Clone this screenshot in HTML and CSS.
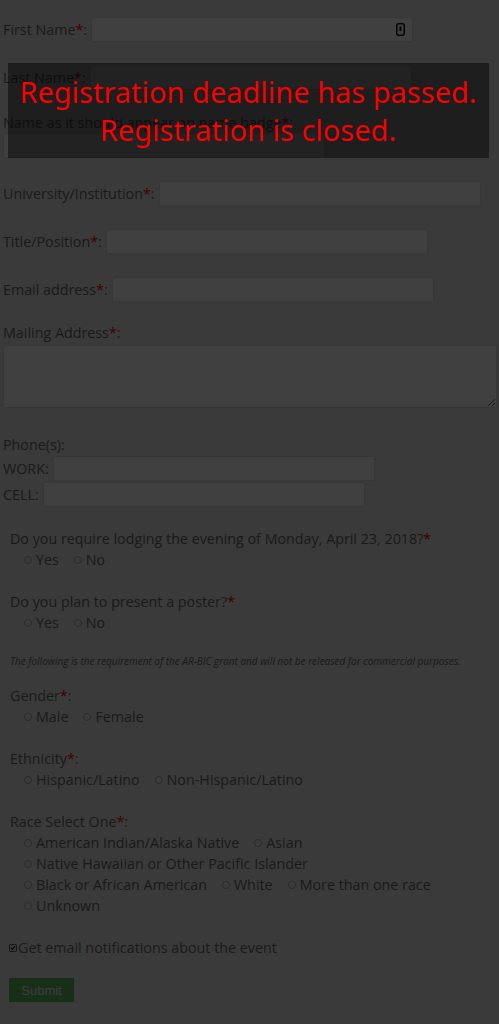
FILE: index.html
```html
<!DOCTYPE html>
<html>
<head>
<meta http-equiv="Content-Type" content="text/html; charset=utf-8" />
<title>Registration</title>
<link rel="stylesheet" href="styles.css">
</head>
<body>
<form class="regForm" onsubmit="return false;">
	<div class="field">
		<label>First Name<span class="req">*</span>:</label>
		<span class="inputWrap">
			<input type="text" class="inputText">
			<svg class="cardIcon" width="9" height="13" viewBox="0 0 9 13"><rect x="0.75" y="0.75" width="7.5" height="11.5" rx="2" fill="none" stroke="#111" stroke-width="1.5"/><rect x="3.5" y="3.5" width="2" height="4.5" fill="#111"/></svg>
		</span>
	</div>
	<div class="field">
		<label>Last Name<span class="req">*</span>:</label>
		<input type="text" class="inputText">
	</div>
	<div class="stacked">
		<label>Name as it should appear on name badge<span class="req">*</span>:</label>
		<input type="text" class="inputText">
	</div>
	<div class="field">
		<label>University/Institution<span class="req">*</span>:</label>
		<input type="text" class="inputText">
	</div>
	<div class="field">
		<label>Title/Position<span class="req">*</span>:</label>
		<input type="text" class="inputText">
	</div>
	<div class="field lastInline">
		<label>Email address<span class="req">*</span>:</label>
		<input type="text" class="inputText">
	</div>
	<div class="stacked mailing">
		<label>Mailing Address<span class="req">*</span>:</label>
		<textarea class="inputArea"></textarea>
	</div>
	<div class="phones">
		<div class="phoneTitle">Phone(s):</div>
		<div class="field phone">
			<label>WORK:</label>
			<input type="text" class="inputText">
		</div>
		<div class="field phone">
			<label>CELL:</label>
			<input type="text" class="inputText">
		</div>
	</div>

	<div class="questions">
		<div class="group">
			<div class="question">Do you require lodging the evening of Monday, April 23, 2018?<span class="req">*</span></div>
			<div class="options">
				<label class="opt"><input type="radio" name="lodging">Yes</label>
				<label class="opt"><input type="radio" name="lodging">No</label>
			</div>
		</div>
		<div class="group">
			<div class="question">Do you plan to present a poster?<span class="req">*</span></div>
			<div class="options">
				<label class="opt"><input type="radio" name="poster">Yes</label>
				<label class="opt"><input type="radio" name="poster">No</label>
			</div>
		</div>
		<p class="note">The following is the requirement of the AR-BIC grant and will not be released for commercial purposes.</p>
		<div class="group">
			<div class="question">Gender<span class="req">*</span>:</div>
			<div class="options">
				<label class="opt"><input type="radio" name="gender">Male</label>
				<label class="opt"><input type="radio" name="gender">Female</label>
			</div>
		</div>
		<div class="group">
			<div class="question">Ethnicity<span class="req">*</span>:</div>
			<div class="options">
				<label class="opt"><input type="radio" name="ethnicity">Hispanic/Latino</label>
				<label class="opt"><input type="radio" name="ethnicity">Non-Hispanic/Latino</label>
			</div>
		</div>
		<div class="group">
			<div class="question">Race Select One<span class="req">*</span>:</div>
			<div class="options">
				<label class="opt"><input type="radio" name="race">American Indian/Alaska Native</label>
				<label class="opt"><input type="radio" name="race">Asian</label>
				<label class="opt"><input type="radio" name="race">Native Hawaiian or Other Pacific Islander</label>
				<label class="opt"><input type="radio" name="race">Black or African American</label>
				<label class="opt"><input type="radio" name="race">White</label>
				<label class="opt"><input type="radio" name="race">More than one race</label>
				<label class="opt"><input type="radio" name="race">Unknown</label>
			</div>
		</div>
	</div>
	<label class="notify"><input type="checkbox" checked>Get email notifications about the event</label>
	<button type="submit" class="btnSubmit">Submit</button>
</form>

<div class="overlay"></div>
<div class="closedMsg">Registration deadline has passed.<br>Registration is closed.</div>
</body>
</html>
```

FILE: styles.css
```css
body
{
	margin: 0;
	background: #e6e6e6;
	font-family: "Open Sans", "Liberation Sans", Arial, sans-serif;
	font-size: 14.3px;
	color: #6a6a6a;
}
.regForm {padding: 17px 3px 0 3px;}
.req {color: #f00;}

.field
{
	display: flex;
	align-items: center;
	height: 25px;
	margin-bottom: 23px;
}
.field label {white-space: nowrap; margin-right: 4px;}
.lastInline {margin-bottom: 21px;}

.inputWrap {position: relative; display: inline-block; height: 25px;}
.cardIcon {position: absolute; right: 8px; top: 6px;}

.inputText
{
	display: block;
	box-sizing: border-box;
	width: 322px;
	height: 25px;
	margin: 0;
	padding: 2px 4px;
	border: 1px solid #dcdcdc;
	border-radius: 2px;
	background: #fff;
}
.stacked {margin-bottom: 23px;}
.stacked label {display: block; line-height: 20px;}
.mailing {margin-bottom: 27px;}
.inputArea
{
	display: block;
	box-sizing: border-box;
	width: 494px;
	height: 63px;
	margin: 2px 0 0 0;
	border: 1px solid #dcdcdc;
	border-radius: 2px;
	background: #fff;
}

.phoneTitle {line-height: 20px;}
.phone {margin: 1px 0 0 0;}

.questions {margin: 21px 0 0 7px;}
.group {margin-bottom: 21px;}
.question {line-height: 21px;}
.options
{
	display: flex;
	flex-wrap: wrap;
	padding-left: 14px;
	line-height: 21px;
}
.opt
{
	display: inline-flex;
	align-items: center;
	margin-right: 15px;
	white-space: nowrap;
}
.opt input
{
	-webkit-appearance: none;
	appearance: none;
	box-sizing: border-box;
	width: 8px;
	height: 8px;
	margin: 0 4px 0 0;
	border: 1px solid #a4a4a4;
	border-radius: 50%;
	background: #ececec;
}
.note
{
	font-style: italic;
	font-size: 10px;
	line-height: 14px;
	margin: 3px 0 17px 0;
}

.notify
{
	display: flex;
	align-items: center;
	line-height: 21px;
	margin: 1px 0 0 6px;
}
.notify input
{
	-webkit-appearance: none;
	appearance: none;
	box-sizing: border-box;
	width: 8px;
	height: 8px;
	margin: 0 1px 0 0;
	border: 1px solid #666;
	border-radius: 1px;
	background: #d8d8d8 url("data:image/svg+xml;utf8,<svg xmlns='http://www.w3.org/2000/svg' viewBox='0 0 8 8'><path d='M1.5 4.2 L3.2 5.8 L6.5 1.8' fill='none' stroke='black' stroke-width='1.4'/></svg>") center / 100% 100% no-repeat;
}

.btnSubmit
{
	display: block;
	width: 65px;
	height: 24px;
	margin: 20px 0 0 6px;
	padding: 0;
	border: none;
	background: #5cb85c;
	color: #f2f2f2;
	font-family: "Liberation Sans", Arial, sans-serif;
	font-size: 13px;
	cursor: pointer;
}

.overlay
{
	position: fixed;
	top: 0;
	left: 0;
	right: 0;
	bottom: 0;
	background: rgba(0, 0, 0, 0.75);
}
.closedMsg
{
	position: absolute;
	top: 63px;
	left: 8px;
	width: 481px;
	height: 95px;
	display: flex;
	align-items: center;
	justify-content: center;
	text-align: center;
	background: rgba(0, 0, 0, 0.47);
	color: #f00;
	font-family: "Noto Sans", "Open Sans", sans-serif;
	font-size: 29px;
	line-height: 38px;
}
```
